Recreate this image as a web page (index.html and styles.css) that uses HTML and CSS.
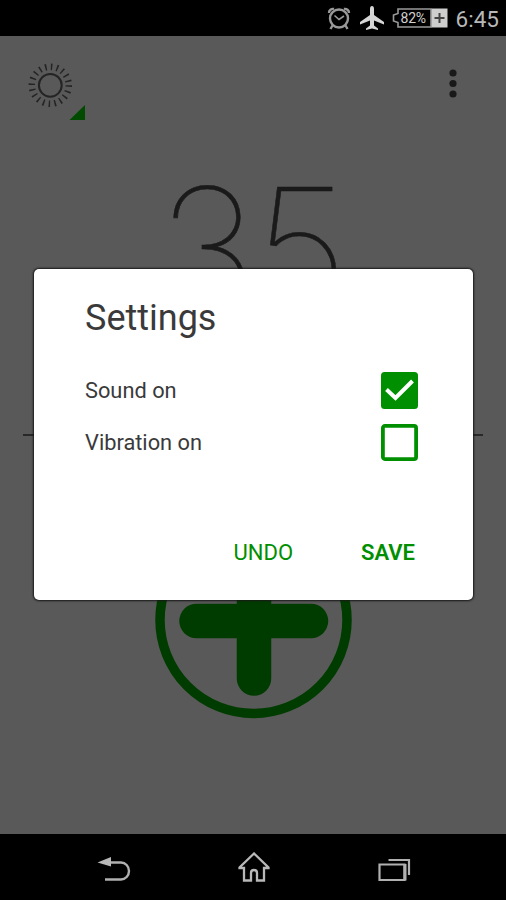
FILE: index.html
```html
<!DOCTYPE html>
<html lang="en">
<head>
<meta charset="utf-8">
<title>Settings</title>
<link rel="stylesheet" href="styles.css">
</head>
<body>
<div class="phone">
  <header class="status">
    <svg class="alarm" width="24" height="26" viewBox="0 0 24 26" fill="none" stroke="#999" stroke-width="2.4">
      <circle cx="12" cy="12.500" r="9"/>
      <path d="M7.5 9.5l4.5 4 5-3.500" stroke-width="1.6"/>
      <path d="M2 7a4 4 0 0 1 5-4M22 7a4 4 0 0 0-5-4M5.500 19.500l-2 3.500M18.500 19.500l2 3.500"/>
    </svg>
    <svg class="plane" width="24" height="24" viewBox="0 0 24 24" fill="#d6d6d6">
      <path d="M12 0c1.300 0 2 1.200 2 3v6l10 7v2.500l-10-4v5l4 3V24l-6-1.500L6 24v-1.500l4-3v-5l-10 4V16l10-7V3c0-1.800.7-3 2-3z"/>
    </svg>
    <div class="battery">
      <svg width="56" height="20" viewBox="0 0 56 20" fill="none">
        <path d="M39 1H6v4.500L1.500 7v6L6 14.500V19h33z" stroke="#999" stroke-width="1.600"/>
        <path d="M39.500 0.500H55.500V19.500H39.500z" fill="#cecece"/>
        <path d="M47.500 5v10M42.500 10h10" stroke="#444" stroke-width="2"/>
      </svg>
      <span class="percent">82%</span>
    </div>
    <span class="clock">6:45</span>
  </header>

  <main class="app">
    <div class="toolbar">
      <svg class="sun" width="60" height="60" viewBox="0 0 60 60" fill="none" stroke="#242424">
        <circle cx="25.300" cy="25.300" r="11.400" stroke-width="2"/>
        <circle cx="25.300" cy="25.300" r="18.500" stroke-width="6.500" stroke-dasharray="1.500 4.312"/>
        <path d="M60 45v15H44.500z" fill="#004b00" stroke="none"/>
      </svg>
      <svg class="more" width="10" height="30" viewBox="0 0 10 30" fill="#191919">
        <circle cx="5" cy="4" r="3.600"/><circle cx="5" cy="14.500" r="3.600"/><circle cx="5" cy="25" r="3.600"/>
      </svg>
    </div>
    <div class="count">35</div>
    <div class="rule"></div>
    <svg class="add" width="198" height="198" viewBox="0 0 198 198" fill="none" stroke="#003c00">
      <circle cx="99.500" cy="99" r="93.500" stroke-width="9.500"/>
      <path d="M42.500 100H157M100 42v115.500" stroke-width="34.500" stroke-linecap="round"/>
    </svg>
    <section class="dialog">
      <h1>Settings</h1>
      <div class="option">
        <span>Sound on</span>
        <svg width="37" height="37" viewBox="0 0 37 37"><rect width="37" height="37" rx="3.500" fill="#008f00"/><path d="M5.500 17.500l9 8.500L31.500 9" fill="none" stroke="#fff" stroke-width="4"/></svg>
      </div>
      <div class="option">
        <span class="wide">Vibration on</span>
        <svg width="37" height="37" viewBox="0 0 37 37"><rect x="1.900" y="1.900" width="33.200" height="33.200" rx="2" fill="#fff" stroke="#008f00" stroke-width="3.800"/></svg>
      </div>
      <div class="actions">
        <span class="undo">UNDO</span>
        <span class="save">SAVE</span>
      </div>
    </section>
  </main>

  <nav class="nav">
    <svg width="34" height="32" viewBox="0 0 34 32" fill="none" stroke="#b0b0b0" stroke-width="2.400">
      <path d="M11 10.500h13a8 8.500 0 0 1 0 17H8"/>
      <path d="M0.500 10.500L14 5v9.500z" fill="#b8b8b8" stroke="none"/>
    </svg>
    <svg width="34" height="32" viewBox="0 0 34 32" fill="none" stroke="#b8b8b8" stroke-width="2.300">
      <path d="M16 1.500L1.500 15.500V16H6v12.500h7V21q0-3 3-3t3 3v7.500h7V16h4.500v-.5z"/>
    </svg>
    <svg width="34" height="32" viewBox="0 0 34 32" fill="none" stroke="#b0b0b0" stroke-width="2.200">
      <path d="M1.500 12.500h25v15.500h-25z"/><path d="M27 12v16.500" stroke-width="3"/>
      <path d="M10.500 8h20.500v15"/>
    </svg>
  </nav>
</div>
</body>
</html>
```
FILE: styles.css
```css
body {
  margin: 0;
  font-family: Roboto, "Liberation Sans", sans-serif;
  background: #000;
}
.phone {
  width: 506px;
  height: 900px;
  display: flex;
  flex-direction: column;
  overflow: hidden;
}
.status {
  height: 36px;
  display: flex;
  align-items: center;
  justify-content: flex-end;
  padding-right: 7px;
  box-sizing: border-box;
  flex: none;
  background: #000;
}
.alarm { margin-right: 9px; margin-top: 2px; }
.plane { margin-right: 8px; }
.battery {
  position: relative;
  height: 20px;
  margin-right: 8px;
}
.percent {
  position: absolute;
  left: 9px;
  top: 2px;
  font-size: 14px;
  line-height: 16px;
  letter-spacing: -0.3px;
  color: #d0d0d0;
}
.clock {
  font-size: 22.5px;
  line-height: 36px;
  color: #b8b8b8;
  margin-top: 2px;
}
.app {
  position: relative;
  flex: 1;
  display: flex;
  flex-direction: column;
  align-items: center;
  background: #595959;
}
.toolbar {
  align-self: stretch;
  height: 124px;
  padding: 24px 48px 0 25px;
  display: flex;
  justify-content: space-between;
  box-sizing: border-box;
}
.more { margin-top: 9px; }
.count {
  flex: none;
  height: 274px;
  margin-right: 3px;
  font: 100 169px/178px Inter, Lato, sans-serif;
  letter-spacing: -3px;
  -webkit-text-stroke: 0.6px #1a1a1a;
  color: #1a1a1a;
}
.rule {
  flex: none;
  width: 460px;
  height: 2px;
  margin-bottom: 85px;
  background: #282828;
}
.add { flex: none; }
.dialog {
  position: absolute;
  left: 34px;
  top: 233px;
  width: 439px;
  height: 331px;
  padding: 26px 55px 0 51px;
  box-sizing: border-box;
  border-radius: 5px;
  background: #fff;
  box-shadow: 0 0 2px 1px #181818;
  color: #3a3a3a;
}
h1 {
  margin: 0 0 26px;
  font-size: 36px;
  line-height: 46px;
  font-weight: 400;
}
.option {
  display: flex;
  align-items: center;
  justify-content: space-between;
  height: 46px;
  margin-bottom: 6px;
  font-size: 21.8px;
}
.actions {
  display: flex;
  justify-content: flex-end;
  gap: 68px;
  margin-top: 72px;
  padding-right: 3px;
  font-size: 22px;
  line-height: 32px;
  color: #008f00;
}
.save { font-weight: 600; }
.nav {
  height: 66px;
  flex: none;
  display: flex;
  align-items: center;
  justify-content: space-between;
  padding: 2px 94px 0 97px;
  box-sizing: border-box;
  background: #000;
}
```
